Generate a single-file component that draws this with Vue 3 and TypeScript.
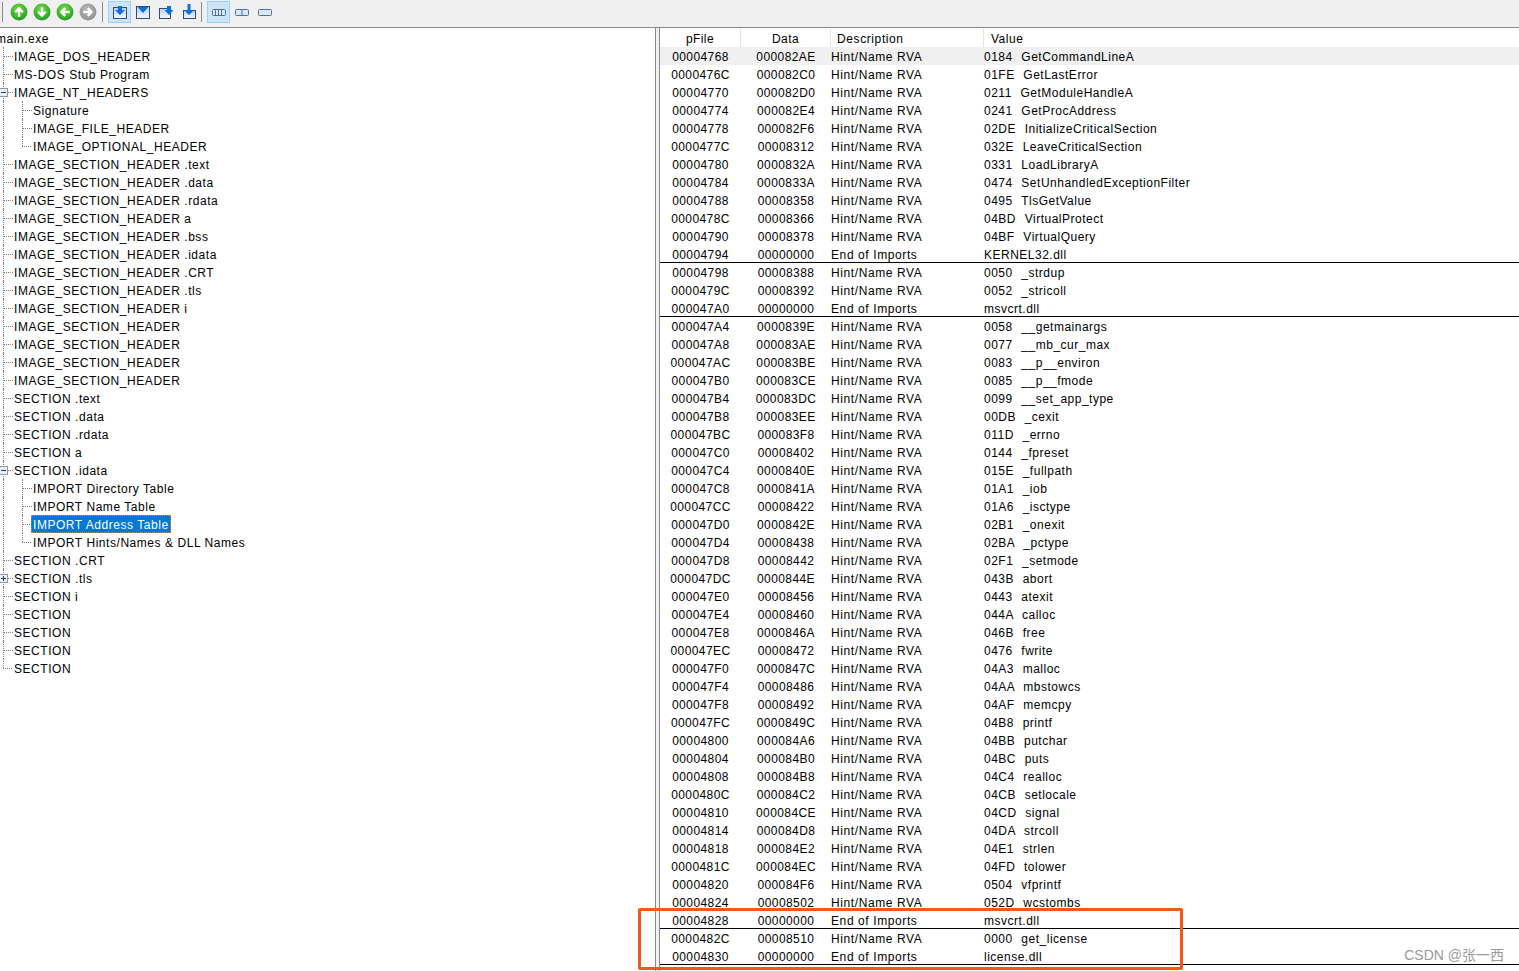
<script setup lang="ts">
interface TreeNode {
  label: string
  level: 1 | 2
  toggle?: '-' | '+'
  lastChild?: boolean
  selected?: boolean
}

const sectionHeaders = ['.text', '.data', '.rdata', 'a', '.bss', '.idata', '.CRT', '.tls', 'i', '', '', '', '']

const tree: TreeNode[] = [
  { label: 'IMAGE_DOS_HEADER', level: 1 },
  { label: 'MS-DOS Stub Program', level: 1 },
  { label: 'IMAGE_NT_HEADERS', level: 1, toggle: '-' },
  { label: 'Signature', level: 2 },
  { label: 'IMAGE_FILE_HEADER', level: 2 },
  { label: 'IMAGE_OPTIONAL_HEADER', level: 2, lastChild: true },
  ...sectionHeaders.map((s): TreeNode => ({ label: `IMAGE_SECTION_HEADER ${s}`, level: 1 })),
  { label: 'SECTION .text', level: 1 },
  { label: 'SECTION .data', level: 1 },
  { label: 'SECTION .rdata', level: 1 },
  { label: 'SECTION a', level: 1 },
  { label: 'SECTION .idata', level: 1, toggle: '-' },
  { label: 'IMPORT Directory Table', level: 2 },
  { label: 'IMPORT Name Table', level: 2 },
  { label: 'IMPORT Address Table', level: 2, selected: true },
  { label: 'IMPORT Hints/Names & DLL Names', level: 2, lastChild: true },
  { label: 'SECTION .CRT', level: 1 },
  { label: 'SECTION .tls', level: 1, toggle: '+' },
  { label: 'SECTION i', level: 1 },
  { label: 'SECTION', level: 1 },
  { label: 'SECTION', level: 1 },
  { label: 'SECTION', level: 1 },
  { label: 'SECTION', level: 1, lastChild: true },
]

// pFile, data, value - data of 00000000 closes an import block
const rawRows = `00004768 000082AE 0184  GetCommandLineA
0000476C 000082C0 01FE  GetLastError
00004770 000082D0 0211  GetModuleHandleA
00004774 000082E4 0241  GetProcAddress
00004778 000082F6 02DE  InitializeCriticalSection
0000477C 00008312 032E  LeaveCriticalSection
00004780 0000832A 0331  LoadLibraryA
00004784 0000833A 0474  SetUnhandledExceptionFilter
00004788 00008358 0495  TlsGetValue
0000478C 00008366 04BD  VirtualProtect
00004790 00008378 04BF  VirtualQuery
00004794 00000000 KERNEL32.dll
00004798 00008388 0050  _strdup
0000479C 00008392 0052  _stricoll
000047A0 00000000 msvcrt.dll
000047A4 0000839E 0058  __getmainargs
000047A8 000083AE 0077  __mb_cur_max
000047AC 000083BE 0083  __p__environ
000047B0 000083CE 0085  __p__fmode
000047B4 000083DC 0099  __set_app_type
000047B8 000083EE 00DB  _cexit
000047BC 000083F8 011D  _errno
000047C0 00008402 0144  _fpreset
000047C4 0000840E 015E  _fullpath
000047C8 0000841A 01A1  _iob
000047CC 00008422 01A6  _isctype
000047D0 0000842E 02B1  _onexit
000047D4 00008438 02BA  _pctype
000047D8 00008442 02F1  _setmode
000047DC 0000844E 043B  abort
000047E0 00008456 0443  atexit
000047E4 00008460 044A  calloc
000047E8 0000846A 046B  free
000047EC 00008472 0476  fwrite
000047F0 0000847C 04A3  malloc
000047F4 00008486 04AA  mbstowcs
000047F8 00008492 04AF  memcpy
000047FC 0000849C 04B8  printf
00004800 000084A6 04BB  putchar
00004804 000084B0 04BC  puts
00004808 000084B8 04C4  realloc
0000480C 000084C2 04CB  setlocale
00004810 000084CE 04CD  signal
00004814 000084D8 04DA  strcoll
00004818 000084E2 04E1  strlen
0000481C 000084EC 04FD  tolower
00004820 000084F6 0504  vfprintf
00004824 00008502 052D  wcstombs
00004828 00000000 msvcrt.dll
0000482C 00008510 0000  get_license
00004830 00000000 license.dll`

const rows = rawRows.split('\n').map((line) => {
  const first = line.indexOf(' ')
  const second = line.indexOf(' ', first + 1)
  const data = line.slice(first + 1, second)
  const end = data === '00000000'
  return {
    pFile: line.slice(0, first),
    data,
    end,
    desc: end ? 'End of Imports' : 'Hint/Name RVA',
    value: line.slice(second + 1),
  }
})

const navIcons = [
  { fill: 'url(#go)', arrow: 'M8 12.2V5M4.6 8.2 8 4.8l3.4 3.4' },
  { fill: 'url(#go)', arrow: 'M8 3.8V11M4.6 7.8 8 11.2l3.4-3.4' },
  { fill: 'url(#go)', arrow: 'M12.2 8H5M8.2 4.6 4.8 8l3.4 3.4' },
  { fill: 'url(#off)', arrow: 'M3.8 8H11M7.8 4.6 11.2 8l-3.4 3.4' },
]
</script>

<template>
  <div class="app">
    <header class="toolbar">
      <span class="sep"></span>
      <div class="group first">
        <button v-for="(icon, i) in navIcons" :key="i" class="tool">
          <svg width="18" height="18" viewBox="0 0 16 16">
            <defs>
              <radialGradient id="go" cx="45%" cy="35%" r="70%">
                <stop offset="0" stop-color="#7fe04a" />
                <stop offset="1" stop-color="#16981c" />
              </radialGradient>
              <radialGradient id="off" cx="45%" cy="35%" r="70%">
                <stop offset="0" stop-color="#b8b8b8" />
                <stop offset="1" stop-color="#8f8f8f" />
              </radialGradient>
              <linearGradient id="pane" x1="0" y1="0" x2="0" y2="1">
                <stop offset="0" stop-color="#b9d0f2" />
                <stop offset="1" stop-color="#f2f6fd" />
              </linearGradient>
            </defs>
            <circle cx="8" cy="8" r="7.5" :fill="icon.fill" />
            <path :d="icon.arrow" fill="none" stroke="#fff" stroke-width="2.1" />
          </svg>
        </button>
      </div>
      <span class="sep"></span>
      <div class="group middle">
        <button class="tool on">
          <svg width="16" height="16" viewBox="0 0 16 16">
            <rect x="1.5" y="3.5" width="13" height="11" fill="url(#pane)" stroke="#2f4a7c" />
            <path d="M6 2h4v4h3l-5 5-5-5h3z" fill="#0a6fe0" />
          </svg>
        </button>
        <button class="tool">
          <svg width="16" height="16" viewBox="0 0 16 16">
            <rect x="1.5" y="2.5" width="13" height="12" fill="url(#pane)" stroke="#2f4a7c" />
            <path d="M2.5 3h11L8 9z" fill="#0a6fe0" />
          </svg>
        </button>
        <button class="tool">
          <svg width="16" height="16" viewBox="0 0 16 16">
            <rect x="1.5" y="4.5" width="11" height="10" fill="url(#pane)" stroke="#2f4a7c" />
            <path d="M9 2h4v4h2.5L11 11 6.500 6H9z" fill="#0a6fe0" />
          </svg>
        </button>
        <button class="tool">
          <svg width="16" height="16" viewBox="0 0 16 16">
            <rect x="2.500" y="6.500" width="12" height="8" fill="url(#pane)" stroke="#2f4a7c" />
            <path d="M6.500 0h3v6H13l-5 5-5-5h3.500z" fill="#0a6fe0" />
          </svg>
        </button>
      </div>
      <span class="sep"></span>
      <div class="group">
        <button class="tool on">
          <svg width="16" height="16" viewBox="0 0 16 16">
            <rect x="1.500" y="5.500" width="13" height="6" rx="1" fill="#dbe7fa" stroke="#4f6ea8" />
            <path d="M4.500 6v5M7.500 6v5M10.500 6v5" stroke="#4f6ea8" />
          </svg>
        </button>
        <button class="tool">
          <svg width="16" height="16" viewBox="0 0 16 16">
            <rect x="1.500" y="5.500" width="13" height="6" rx="1" fill="#dbe7fa" stroke="#4f6ea8" />
            <path d="M8 6v5" stroke="#4f6ea8" />
          </svg>
        </button>
        <button class="tool">
          <svg width="16" height="16" viewBox="0 0 16 16">
            <rect x="1.500" y="5.500" width="13" height="6" rx="1" fill="#dbe7fa" stroke="#4f6ea8" />
          </svg>
        </button>
      </div>
    </header>

    <main class="panes">
      <nav class="tree">
        <div class="node root"><span class="label">main.exe</span></div>
        <div v-for="(node, i) in tree" :key="i" class="node">
          <span v-if="node.level === 2" class="rail"></span>
          <span class="elbow" :class="{ end: node.lastChild }"></span>
          <span v-if="node.toggle" class="toggle">
            <svg width="9" height="9" viewBox="0 0 9 9">
              <rect x="0.500" y="0.500" width="8" height="8" fill="#eef0f4" stroke="#8c9aa8" />
              <path :d="node.toggle === '-' ? 'M2 4.500h5' : 'M2 4.500h5M4.500 2v5'" stroke="#1c3f7c" />
            </svg>
          </span>
          <span class="label" :class="{ selected: node.selected }">{{ node.label }}</span>
        </div>
      </nav>
      <div class="splitter"></div>
      <section class="grid">
        <div class="row head">
          <span class="cell num">pFile</span>
          <span class="cell num">Data</span>
          <span class="cell desc">Description</span>
          <span class="cell value">Value</span>
        </div>
        <div v-for="(row, i) in rows" :key="row.pFile" class="row" :class="{ first: i === 0, end: row.end }">
          <span class="cell num">{{ row.pFile }}</span>
          <span class="cell num">{{ row.data }}</span>
          <span class="cell desc">{{ row.desc }}</span>
          <span class="cell value">{{ row.value }}</span>
        </div>
      </section>
    </main>

    <div class="callout"></div>
    <div class="watermark">CSDN @张一西</div>
  </div>
</template>

<style scoped>
.app {
  position: relative;
  display: flex;
  flex-direction: column;
  height: 971px;
  overflow: hidden;
  background: #fff;
  color: #000;
  font-family: "Liberation Sans", Arial, sans-serif;
  font-size: 12px;
}

/* toolbar */
.toolbar {
  display: flex;
  align-items: center;
  flex: none;
  height: 27px;
  box-sizing: border-box;
  padding-bottom: 3px;
  background: #f0f0f0;
}
.sep {
  width: 1px;
  height: 20px;
  margin: 0 5px 0 2px;
  background: #8a8a8a;
}
.group {
  display: flex;
}
.group.first {
  margin-left: -1px;
}
.group.middle {
  margin-right: -1px;
}
.group.first + .sep {
  margin-left: 3px;
}
.tool {
  display: flex;
  align-items: center;
  justify-content: center;
  width: 23px;
  height: 22px;
  padding: 0;
  border: 1px solid transparent;
  background: none;
}
.tool.on {
  background: #cce4f7;
  border-color: #99d1ff;
}

/* panes */
.panes {
  display: flex;
  flex: 1;
  min-height: 0;
  border-top: 1px solid #8a8a8a;
}
.tree {
  width: 656px;
  box-sizing: border-box;
  flex: none;
  padding: 1px 0 0 3px;
  overflow: hidden;
  border-right: 1px solid #8a8a8a;
  letter-spacing: 0.55px;
}
.splitter {
  width: 3px;
  flex: none;
  background: #f0f0f0;
}
.grid {
  flex: 1;
  min-width: 0;
  padding-top: 1px;
  border-left: 1px solid #8a8a8a;
}

/* tree */
.node {
  position: relative;
  display: flex;
  height: 18px;
  line-height: 20px;
  white-space: nowrap;
}
.root {
  margin-left: -7px;
}
.rail {
  width: 19px;
  box-sizing: border-box;
  border-left: 1px dotted #808080;
}
.elbow {
  position: relative;
  width: 11px;
  box-sizing: border-box;
  border-left: 1px dotted #808080;
}
.elbow::after {
  content: "";
  position: absolute;
  left: 0;
  top: 9px;
  width: 9px;
  border-top: 1px dotted #808080;
}
.elbow.end {
  border-left: none;
}
.elbow.end::before {
  content: "";
  position: absolute;
  left: 0;
  top: 0;
  height: 9px;
  border-left: 1px dotted #808080;
}
.toggle {
  position: absolute;
  left: -4px;
  top: 5px;
  display: flex;
}
.label {
  height: 18px;
}
.label.selected {
  margin-left: -2px;
  padding: 0 1px;
  height: 18px;
  line-height: 18px;
  border: 1px dotted #e08a20;
  box-sizing: border-box;
  background: #0078d7;
  color: #fff;
}

/* table */
.row {
  display: grid;
  grid-template-columns: 81px 90px 153px 1fr;
  height: 18px;
  box-sizing: border-box;
  line-height: 20px;
  white-space: pre;
}
.row.first {
  background: #f0f0f0;
}
.row.end {
  border-bottom: 1px solid #000;
}
.num {
  text-align: center;
  letter-spacing: 0.4px;
}
.desc {
  letter-spacing: 0.6px;
}
.value {
  letter-spacing: 0.5px;
  word-spacing: 0.5px;
}
.head .cell {
  height: 18px;
  box-sizing: border-box;
  border-right: 1px solid #e5e5e5;
}
.head .desc {
  padding-left: 6px;
}
.head .value {
  padding-left: 7px;
  border-right: none;
}

/* overlays on top of the screenshot */
.callout {
  position: absolute;
  left: 638px;
  top: 908px;
  width: 545px;
  height: 62px;
  box-sizing: border-box;
  border: 3px solid #f15a16;
  border-radius: 2px;
}
.watermark {
  position: absolute;
  right: 15px;
  top: 944px;
  font-family: "Liberation Sans", "Noto Sans CJK SC", sans-serif;
  font-size: 14px;
  color: #9a9a9a;
}
</style>
